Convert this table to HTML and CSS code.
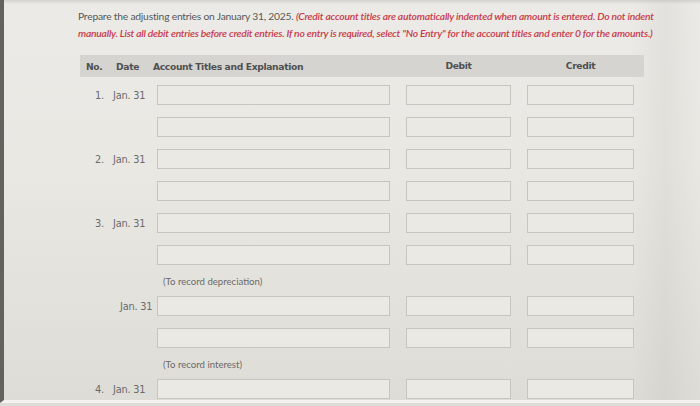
FILE: index.html
```html
<!DOCTYPE html>
<html lang="en">
<head>
<meta charset="utf-8">
<title>Adjusting entries</title>
<link rel="stylesheet" href="styles.css">
</head>
<body>
<main class="sheet">
  <p class="intro"><span class="lead">Prepare the adjusting entries on January 31, 2025.</span> <em class="hint">(Credit account titles are automatically indented when amount is entered. Do not indent manually. List all debit entries before credit entries. If no entry is required, select "No Entry" for the account titles and enter 0 for the amounts.)</em></p>

  <section class="journal">
    <div class="head">
      <span class="h-no">No.</span>
      <span class="h-date">Date</span>
      <span class="h-acct">Account Titles and Explanation</span>
      <span class="h-amt">Debit</span>
      <span class="h-amt">Credit</span>
    </div>

    <div class="row">
      <span class="no">1.</span><span class="date">Jan. 31</span>
      <span class="box acct"></span><span class="cell"><span class="box"></span></span><span class="cell"><span class="box"></span></span>
    </div>
    <div class="row">
      <span class="no"></span><span class="date"></span>
      <span class="box acct"></span><span class="cell"><span class="box"></span></span><span class="cell"><span class="box"></span></span>
    </div>
    <div class="row">
      <span class="no">2.</span><span class="date">Jan. 31</span>
      <span class="box acct"></span><span class="cell"><span class="box"></span></span><span class="cell"><span class="box"></span></span>
    </div>
    <div class="row">
      <span class="no"></span><span class="date"></span>
      <span class="box acct"></span><span class="cell"><span class="box"></span></span><span class="cell"><span class="box"></span></span>
    </div>
    <div class="row">
      <span class="no">3.</span><span class="date">Jan. 31</span>
      <span class="box acct"></span><span class="cell"><span class="box"></span></span><span class="cell"><span class="box"></span></span>
    </div>
    <div class="row">
      <span class="no"></span><span class="date"></span>
      <span class="box acct"></span><span class="cell"><span class="box"></span></span><span class="cell"><span class="box"></span></span>
    </div>
    <div class="note"><span class="note-text">(To record depreciation)</span></div>
    <div class="row">
      <span class="no"></span><span class="date date-solo">Jan. 31</span>
      <span class="box acct"></span><span class="cell"><span class="box"></span></span><span class="cell"><span class="box"></span></span>
    </div>
    <div class="row">
      <span class="no"></span><span class="date"></span>
      <span class="box acct"></span><span class="cell"><span class="box"></span></span><span class="cell"><span class="box"></span></span>
    </div>
    <div class="note"><span class="note-text">(To record interest)</span></div>
    <div class="row">
      <span class="no">4.</span><span class="date">Jan. 31</span>
      <span class="box acct"></span><span class="cell"><span class="box"></span></span><span class="cell"><span class="box"></span></span>
    </div>
  </section>
</main>
</body>
</html>
```

FILE: styles.css
```css
html, body {
  margin: 0;
  padding: 0;
  height: 100%;
}

body {
  background: linear-gradient(180deg, #d2d2ce 0, #ebeae6 4px, #e9e8e3 40%, #dedcd6 100%);
  overflow: hidden;
}

.sheet {
  box-sizing: border-box;
  height: 403px;
  border-left: 4px solid #62625e;
  border-bottom: 3px solid #f3f3f1;
  padding: 8px 0 0 74px;
  background: linear-gradient(90deg, rgba(0,0,0,0) 0, rgba(0,0,0,0) 90%, rgba(120,120,112,0.08) 95%, rgba(0,0,0,0) 100%);
}

.intro {
  margin: 0;
  width: 590px;
  font-family: Lato, "Open Sans", sans-serif;
  font-size: 10.3px;
  line-height: 17px;
  letter-spacing: -0.22px;
  color: #585858;
}

.hint {
  color: #c8394b;
  font-style: italic;
  font-weight: 600;
}

.journal {
  margin-top: 13px;
  margin-left: 2px;
  width: 564px;
  font-family: "DejaVu Sans", Verdana, sans-serif;
}

.head {
  display: grid;
  grid-template-columns: 30px 43px 237px 121px 123px;
  align-items: center;
  height: 22px;
  background: #d5d4d1;
  font-size: 9.2px;
  font-weight: bold;
  color: #505050;
  letter-spacing: -0.35px;
}

.h-no { padding-left: 6px; }
.h-date { padding-left: 6px; }
.h-acct { padding-left: 0; }
.h-amt { padding-left: 16px; text-align: center; margin-top: -2px; }

.journal .head + .row { margin-top: 8px; }

.row {
  display: grid;
  grid-template-columns: 30px 47px 233px 121px 123px;
  align-items: center;
  height: 20px;
  margin-bottom: 12px;
  font-size: 9.8px;
  color: #6a6a6a;
  letter-spacing: -0.2px;
}

.no {
  text-align: right;
  padding-right: 6px;
}

.date {
  padding-left: 3px;
  white-space: nowrap;
}

.date-solo {
  padding-left: 10px;
}

.cell {
  padding-left: 16px;
  height: 20px;
}

.box {
  display: block;
  box-sizing: border-box;
  height: 20px;
  border: 1px solid #c6c5bf;
  background: #eae9e4;
}

.cell .box { width: 105px; }
.cell:last-child .box { width: 107px; }

.note {
  height: 14px;
  margin: -2px 0 7px 0;
  padding-left: 83px;
  font-family: Lato, "Open Sans", sans-serif;
  font-size: 9.6px;
  line-height: 14px;
  color: #6a6a6a;
}
```
